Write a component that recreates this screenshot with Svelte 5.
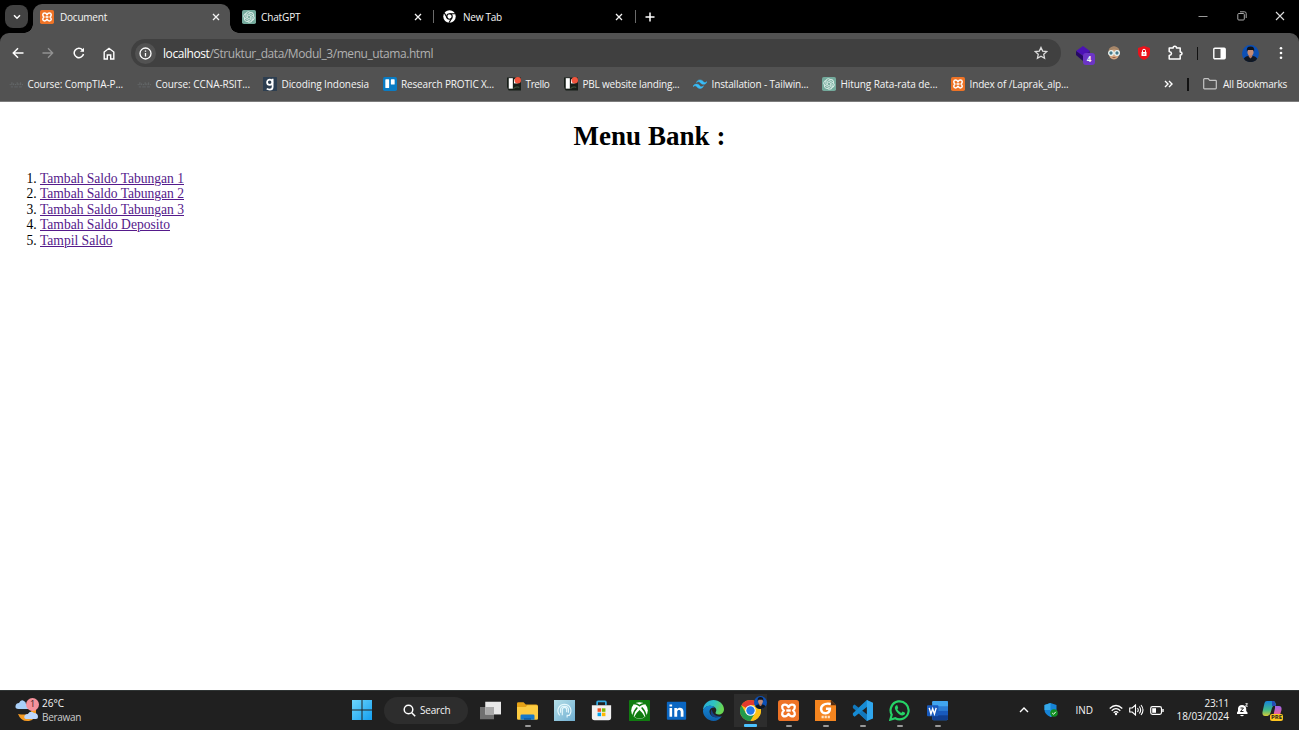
<script>
  const bookmarks = [
    { icon: 'cisco', label: 'Course: CompTIA-P...', w: 95.5, cell: 128 },
    { icon: 'cisco', label: 'Course: CCNA-RSIT...', w: 94.5, cell: 126 },
    { icon: 'dicoding', label: 'Dicoding Indonesia', w: 87.5, cell: 119.5 },
    { icon: 'trello', label: 'Research PROTIC X...', w: 93, cell: 124.5 },
    { icon: 'board', label: 'Trello', w: 24, cell: 57 },
    { icon: 'board', label: 'PBL website landing...', w: 97, cell: 129 },
    { icon: 'tailwind', label: 'Installation - Tailwin...', w: 97, cell: 129 },
    { icon: 'gpt', label: 'Hitung Rata-rata de...', w: 97, cell: 129 },
    { icon: 'xampp', label: 'Index of /Laprak_alp...', w: 99, cell: 130 }
  ];
  const links = [
    { label: 'Tambah Saldo Tabungan 1', w: 144 },
    { label: 'Tambah Saldo Tabungan 2', w: 144 },
    { label: 'Tambah Saldo Tabungan 3', w: 144 },
    { label: 'Tambah Saldo Deposito', w: 130 },
    { label: 'Tampil Saldo', w: 72.5 }
  ];
  const apps = [
    { icon: 'taskview' },
    { icon: 'explorer', run: true },
    { icon: 'finger' },
    { icon: 'store' },
    { icon: 'xbox' },
    { icon: 'linkedin' },
    { icon: 'edge' },
    { icon: 'chrome', active: true },
    { icon: 'xampp', run: true },
    { icon: 'foxit', run: true },
    { icon: 'vscode', run: true },
    { icon: 'whatsapp', run: true },
    { icon: 'word', run: true }
  ];

  // Tracks the text so that the label fills the given width.
  function fit(node, width) {
    node.style.letterSpacing = '0px';
    const natural = node.getBoundingClientRect().width;
    node.style.letterSpacing = (width - natural) / node.textContent.length + 'px';
  }
</script>

{#snippet icon(name, size)}
  <svg width={size} height={size} viewBox="0 0 24 24" fill="none">
    {#if name === 'xampp'}
      <rect width="24" height="24" rx="3" fill="#ee7326" />
      <path d="M12 8.200Q10.500 5.300 8 5.300C4 5.300 3.800 9.500 6.800 12 3.800 14.500 4 18.700 8 18.700q2.500 0 4-2.900 1.500 2.900 4 2.900c4 0 4.200-4.200 1.200-6.700 3-2.500 2.800-6.700-1.200-6.700q-2.500 0-4 2.900Z" stroke="#fff" stroke-width="2.600" stroke-linejoin="round" />
      <path d="M9.500 12h5" stroke="#fff" stroke-width="2.800" />
    {:else if name === 'gpt'}
      <rect width="24" height="24" rx="3" fill="#74aa9c" />
      <path transform="translate(2.400 2.400) scale(.8)" stroke="#e9f5f1" stroke-width=".3" fill="#e9f5f1" d="M22.2819 9.8211a5.9847 5.9847 0 0 0-.5157-4.9108 6.0462 6.0462 0 0 0-6.5098-2.9A6.0651 6.0651 0 0 0 4.9807 4.1818a5.9847 5.9847 0 0 0-3.9977 2.9 6.0462 6.0462 0 0 0 .7427 7.0966 5.98 5.98 0 0 0 .511 4.9107 6.051 6.051 0 0 0 6.5146 2.9001A5.9847 5.9847 0 0 0 13.2599 24a6.0557 6.0557 0 0 0 5.7718-4.2058 5.9894 5.9894 0 0 0 3.9977-2.9001 6.0557 6.0557 0 0 0-.7475-7.0729zm-9.022 12.6081a4.4755 4.4755 0 0 1-2.8764-1.0408l.1419-.0804 4.7783-2.7582a.7948.7948 0 0 0 .3927-.6813v-6.7369l2.02 1.1686a.071.071 0 0 1 .038.052v5.5826a4.504 4.504 0 0 1-4.4945 4.4944zm-9.6607-4.1254a4.4708 4.4708 0 0 1-.5346-3.0137l.142.0852 4.783 2.7582a.7712.7712 0 0 0 .7806 0l5.8428-3.3685v2.3324a.0804.0804 0 0 1-.0332.0615L9.74 19.9502a4.4992 4.4992 0 0 1-6.1408-1.6464zM2.3408 7.8956a4.485 4.485 0 0 1 2.3655-1.9728V11.6a.7664.7664 0 0 0 .3879.6765l5.8144 3.3543-2.0201 1.1685a.0757.0757 0 0 1-.071 0l-4.8303-2.7865A4.504 4.504 0 0 1 2.3408 7.872zm16.5963 3.8558L13.1038 8.364 15.1192 7.2a.0757.0757 0 0 1 .071 0l4.8303 2.7913a4.4944 4.4944 0 0 1-.6765 8.1042v-5.6772a.79.79 0 0 0-.407-.667zm2.0107-3.0231l-.142-.0852-4.7735-2.7818a.7759.7759 0 0 0-.7854 0L9.409 9.2297V6.8974a.0662.0662 0 0 1 .0284-.0615l4.8303-2.7866a4.4992 4.4992 0 0 1 6.6802 4.66zM8.3065 12.863l-2.02-1.1638a.0804.0804 0 0 1-.038-.0567V6.0742a4.4992 4.4992 0 0 1 7.3757-3.4537l-.142.0805L8.704 5.459a.7948.7948 0 0 0-.3927.6813zm1.0976-2.3654l2.602-1.4998 2.6069 1.4998v2.9994l-2.5974 1.4997-2.6067-1.4997Z" />
    {:else if name === 'cisco'}
      <path d="M2 12v2M5 9v5M8 11v3M11 12v2M14 9v5M17 11v3M20 9v5M23 12v2" stroke="#6b7072" stroke-width="1.300" />
      <path d="M3 17h4M9 17h6M17 17h5" stroke="#62676a" stroke-width="1.500" />
    {:else if name === 'dicoding'}
      <rect width="24" height="24" rx="1" fill="#2d3e50" />
      <circle cx="11.500" cy="9" r="4.500" stroke="#fff" stroke-width="3" />
      <path d="M16.500 3v14c0 3-2 4.500-5 4.500-2 0-4-.5-5-1.500" stroke="#fff" stroke-width="3" />
    {:else if name === 'trello'}
      <rect width="24" height="24" rx="3" fill="#0a7cc4" />
      <rect x="4" y="4" width="6.500" height="15" rx="1" fill="#fff" />
      <rect x="13.500" y="4" width="6.500" height="9" rx="1" fill="#fff" />
    {:else if name === 'board'}
      <path d="M0 1h24v22H3Q0 20 0 16Z" fill="#171e18" />
      <path d="M3 2h7v18H3Z" fill="#fff" />
      <path d="M12 4h6v7h-6Z" fill="#fff" />
      <path d="M11 20q5-5 10-2" stroke="#3d4c3a" stroke-width="2" />
      <circle cx="18.500" cy="5.500" r="5.500" fill="#f1553d" />
    {:else if name === 'tailwind'}
      <path d="M12 5c-3.200 0-5.200 1.600-6 4.800 1.200-1.600 2.600-2.200 4.200-1.800.9.200 1.600.9 2.300 1.700C13.700 10.900 15.100 12.400 18 12.400c3.200 0 5.200-1.600 6-4.800-1.200 1.600-2.600 2.200-4.200 1.800-.9-.2-1.600-.9-2.300-1.700C16.300 6.500 14.900 5 12 5ZM6 12.200c-3.200 0-5.200 1.600-6 4.800 1.200-1.600 2.600-2.200 4.200-1.800.9.200 1.600.9 2.300 1.700 1.200 1.200 2.600 2.700 5.500 2.700 3.200 0 5.200-1.600 6-4.800-1.200 1.600-2.600 2.200-4.200 1.800-.9-.2-1.600-.9-2.300-1.700-1.200-1.200-2.600-2.700-5.500-2.700Z" fill="#38bdf8" stroke="#38bdf8" stroke-width=".8" />
    {:else if name === 'chromemono'}
      <circle cx="12" cy="12" r="11.500" fill="#fff" />
      <circle cx="12" cy="12" r="5" stroke="#000" stroke-width="2" />
      <path d="M12 7h11M7.700 14.500 2.300 5.200M16.300 14.500 11 23.500" stroke="#000" stroke-width="2" />
    {:else if name === 'taskview'}
      <rect x="0" y="8" width="16" height="14" fill="#707070" />
      <rect x="6" y="2" width="18" height="14.500" fill="#e8e8e8" />
      <rect x="6" y="8" width="10" height="8.500" fill="#a9a9a9" />
    {:else if name === 'explorer'}
      <path d="M0 4q0-1.500 1.500-1.500h6L10 5H22q2 0 2 2v4H0Z" fill="#e7a316" />
      <path d="M0 8h10l2-2h10q2 0 2 2v13q0 1.500-1.500 1.500h-21Q0 22.500 0 21Z" fill="#fdcc42" />
      <path d="M4 22.500V18q0-1.500 1.500-1.500h13Q20 16.500 20 18v4.500Z" fill="#1679cb" />
      <path d="M8 22.500V21h8v1.500Z" fill="#0a559c" />
    {:else if name === 'finger'}
      <defs><linearGradient id="fg" x1="0" y1="0" x2="1" y2="1"><stop stop-color="#b5dfe8" /><stop offset="1" stop-color="#70afd2" /></linearGradient></defs>
      <rect width="24" height="24" fill="url(#fg)" />
      <path d="M6.500 17.500C2 12 5.500 5 12 5s9.500 7 5.500 12.500H15V20M9.500 17.500V11c0-3.500 5-3.500 5 0v3M7.500 14.500v-4c.5-4.500 8.500-4.500 9 0v4" stroke="#e4f7fc" stroke-width="1.300" />
    {:else if name === 'store'}
      <path d="M7 6V2.500q0-1 1-1h8q1 0 1 1V6" stroke="#31a8e0" stroke-width="2" />
      <path d="M1 6h22v14q0 3-3 3H4q-3 0-3-3Z" fill="#f1f1f1" />
      <path d="M7.500 9.500h4v4h-4Z" fill="#f25022" /><path d="M12.500 9.500h4v4h-4Z" fill="#7fba00" />
      <path d="M7.500 14.500h4v4h-4Z" fill="#00a4ef" /><path d="M12.500 14.500h4v4h-4Z" fill="#ffb900" />
    {:else if name === 'xbox'}
      <rect width="24" height="24" rx="1" fill="#107c10" />
      <circle cx="12" cy="12" r="9.500" fill="#fff" />
      <path d="M6 4.500C8 3.800 10 5 12 6.500 14 5 16 3.800 18 4.500M9.500 8.500C6.500 11.500 5 15 4.300 19M14.500 8.500c3 3 4.500 6.500 5.200 10.500" stroke="#107c10" stroke-width="1.800" />
      <path d="M12 11.500q-4 3.500-6 7.500 6 4.500 12 0-2-4-6-7.500Z" fill="#107c10" />
    {:else if name === 'linkedin'}
      <rect x="1" y="2" width="22" height="20.500" rx="1" fill="#0a66c2" />
      <path d="M4 9h3v10H4ZM4 5h3v2.500H4ZM9.500 9h3v1.500C14 8 20 8 20 13v6h-3.200v-5.500c0-3-4-2.800-4 0V19H9.500Z" fill="#fff" />
    {:else if name === 'edge'}
      <defs>
        <linearGradient id="ed" x1="0" y1="0" x2="1" y2=".3"><stop stop-color="#26a9df" /><stop offset=".55" stop-color="#2fc3c0" /><stop offset="1" stop-color="#69d652" /></linearGradient>
        <linearGradient id="ee" x1="0" y1="0" x2="0" y2="1"><stop stop-color="#1485d2" /><stop offset="1" stop-color="#0e61ad" /></linearGradient>
      </defs>
      <path d="M0 12C0 5 5.500 0 12 0s12 5 12 10.500c0 4-3 6-6 6-2.500 0-4.500-1-3.500-2.500C17 10 13 6.500 8.500 6.500 4 6.500 1 9 0 12Z" fill="url(#ed)" />
      <path d="M0 12c1-3.500 4-5.500 8.500-5.500 2.500 0 4 1 5 2C9 8 7 11 7.500 14c.7 4.500 6 7.500 14 4.500C19 22 16 24 12 24 5 24-.4 18 0 12Z" fill="url(#ee)" />
      <path d="M10 10.500c-4 6 2 12 11.500 8-5 1-10.500-1-11.500-8Z" fill="#173f80" />
    {:else if name === 'chrome'}
      <circle cx="12" cy="12" r="12" fill="#fbc116" />
      <path d="M12 12 1.600 6A12 12 0 0 1 22.400 6H12Z" fill="#e33b2e" />
      <path d="M1.600 6A12 12 0 0 0 12 24l5.200-9H6.800Z" fill="#229a4c" />
      <path d="M12 6h10.400A12 12 0 0 1 12 24l5.200-9Z" fill="#fbc116" />
      <circle cx="12" cy="12" r="6" fill="#fff" /><circle cx="12" cy="12" r="4.800" fill="#2479e8" />
    {:else if name === 'foxit'}
      <path d="M0 0h18l6 6v18H0Z" fill="#f5851f" /><path d="M18 0v6h6Z" fill="#542c10" />
      <path d="M18 4.500C10 3 6.500 7 7 11c.7 6 10 5.500 10-1h-4.500" stroke="#fff" stroke-width="2.800" />
      <path d="M7.500 19.500h9.500" stroke="#ffe0bd" stroke-width="2.800" stroke-dasharray="2.500 1" />
    {:else if name === 'vscode'}
      <path d="M17 0 4 12l13 12 1-5-8-7 8-7Z" fill="#1687cf" />
      <path d="M1 6.500 3 5l15 12v7L1 9Z" fill="#1279bd" /><path d="M1 17.500 3 19 18 7V0L1 15Z" fill="#168bd4" />
      <path d="m17 0 7 3v18l-7 3Z" fill="#2fa6ed" />
    {:else if name === 'whatsapp'}
      <path d="m1.500 22.500 1.600-5.700a10.300 10.300 0 1 1 4 4Z" stroke="#25d366" stroke-width="2.500" />
      <path d="M8.500 6C6 7.500 6.500 10 8 12.500c2.500 4 6.500 6 9 4.700 1.500-.8 1.500-1.800 1.300-2.500L15.500 13l-1.500 1.800q-3-1.200-4.500-4.200l1-1.600L9.500 6Z" fill="#25d366" />
    {:else if name === 'word'}
      <rect x="6" y="1" width="18" height="22" rx="1.500" fill="#2b7cd3" />
      <path d="M6 2.500Q6 1 7.500 1h15Q24 1 24 2.500V7H6Z" fill="#41a5ee" />
      <path d="M6 12.500h18V18H6Z" fill="#185abd" /><path d="M6 17.500h18v4q0 1.500-1.500 1.500h-15Q6 23 6 21.500Z" fill="#103f91" />
      <rect x="0" y="6" width="13" height="12.500" rx="1" fill="#185abd" />
      <path d="m2.500 9 2 7 2-6 2 6 2-7" stroke="#fff" stroke-width="1.600" />
    {:else if name === 'avatar'}
      <circle cx="12" cy="12" r="12" fill="#0d50b5" />
      <path d="M2.500 19.500q2-4.500 9.500-4.500t9.500 4.500a12 12 0 0 1-19 0Z" fill="#101722" />
      <path d="M9.500 12h5v4.500L12 19l-2.500-2.500Z" fill="#b27661" />
      <ellipse cx="12" cy="9.800" rx="4.300" ry="5.300" fill="#c58b73" />
      <path d="M7 9.500Q5.500 2 12 2t5 7.500L15.800 7H8.200Z" fill="#11131a" />
    {/if}
  </svg>
{/snippet}

{#snippet cross()}
  <svg width="8" height="8" viewBox="0 0 8 8"><path d="m1 1 6 6M7 1 1 7" stroke="#f2f2f2" stroke-width="1.300" /></svg>
{/snippet}

<div class="screen">
  <header class="tabs">
    <button class="drop" aria-label="Search tabs"><svg width="8" height="6" viewBox="0 0 8 6"><path d="m1 1.200 3 3 3-3" fill="none" stroke="#fff" stroke-width="1.500" /></svg></button>
    <div class="tab active">{@render icon('xampp', 14)}<span class="title"><span use:fit={47}>Document</span></span>{@render cross()}</div>
    <div class="tab second">{@render icon('gpt', 14)}<span class="title"><span use:fit={39.5}>ChatGPT</span></span>{@render cross()}</div>
    <i class="bar"></i>
    <div class="tab third">{@render icon('chromemono', 13)}<span class="title"><span use:fit={39}>New Tab</span></span>{@render cross()}</div>
    <i class="bar"></i>
    <svg class="plus" width="10" height="10" viewBox="0 0 10 10"><path d="M5 .5v9M.5 5h9" stroke="#fff" stroke-width="1.500" /></svg>
    <div class="win">
      <svg width="10" height="10" viewBox="0 0 10 10"><path d="M.5 5.500h9" stroke="#999" /></svg>
      <svg width="10" height="10" viewBox="0 0 10 10" fill="none" stroke="#aaa"><rect x=".8" y="2.500" width="6.500" height="6.500" rx="1" /><path d="M3 .8h4.500q1.700 0 1.700 1.700V7" /></svg>
      <svg width="10" height="10" viewBox="0 0 10 10"><path d="m1 1 8 8M9 1 1 9" stroke="#ddd" stroke-width="1.100" /></svg>
    </div>
  </header>

  <div class="toolbar">
    <nav class="nav">
      <svg width="12" height="12" viewBox="0 0 12 12" fill="none" stroke="#fff" stroke-width="1.500"><path d="M11.500 6H1.500M6 1.300 1.300 6 6 10.700" /></svg>
      <svg width="12" height="12" viewBox="0 0 12 12" fill="none" stroke="#929292" stroke-width="1.300"><path d="M.5 6h10M6 1.300 10.700 6 6 10.700" /></svg>
      <svg width="12" height="12" viewBox="0 0 12 12" fill="none" stroke="#fff" stroke-width="1.500"><path d="M10.500 7A4.700 4.700 0 1 1 9.400 2.800L10.500 4" /><path d="M11 .7v4H7Z" fill="#fff" stroke="none" /></svg>
      <svg width="12" height="13" viewBox="0 0 12 13" fill="none" stroke="#fff" stroke-width="1.400"><path d="M1.200 5 6 1.300 10.800 5v7H7.700V8H4.300v4H1.200Z" /></svg>
    </nav>
    <div class="omni">
      <span class="info"><svg width="13" height="13" viewBox="0 0 13 13" fill="none" stroke="#fff" stroke-width="1.300"><circle cx="6.500" cy="6.500" r="5.500" /><path d="M6.500 6v3.500M6.500 3.400v1.300" /></svg></span>
      <span class="url"><span use:fit={270}><b>localhost</b>/Struktur_data/Modul_3/menu_utama.html</span></span>
      <svg width="14" height="14" viewBox="0 0 24 24" fill="none" stroke="#ddd" stroke-width="2.200"><path d="m12 2.500 2.900 6.300 6.900.8-5.100 4.700 1.400 6.800-6.100-3.500-6.100 3.500 1.400-6.800-5.100-4.700 6.900-.8Z" /></svg>
    </div>
    <div class="ext">
      <span class="e1"><svg width="21" height="20" viewBox="0 0 21 20"><path d="m8 1 7 5-7 5-7-5Z" fill="#4b11b5" /><path d="m1 6 7 5v5L1 10Z" fill="#260865" /><path d="m8 11 7-5v5l-7 5Z" fill="#3b0e91" /><rect x="8" y="8" width="12" height="12" rx="3" fill="#6c35c5" /></svg><em>4</em></span>
      <svg class="e2" width="14" height="14" viewBox="0 0 14 14"><ellipse cx="7" cy="7" rx="5.500" ry="6.500" fill="#d3a580" /><path d="M1.500 5Q2 .5 7 .5T12.500 5Q7 2 1.500 5Z" fill="#a78769" /><circle cx="4" cy="7" r="2.300" fill="#477989" stroke="#e8f5f5" stroke-width="1.300" /><circle cx="10" cy="7" r="2.300" fill="#477989" stroke="#e8f5f5" stroke-width="1.300" /><path d="M5.500 11.500h3" stroke="#966049" /></svg>
      <svg class="e3" width="12" height="14" viewBox="0 0 12 14"><path d="M6 0 12 2v5q0 4.500-6 7-6-2.500-6-7V2Z" fill="#e9121b" /><rect x="3.500" y="6" width="5" height="4" fill="#fff" /><path d="M4.500 6V4.500q0-1.200 1.500-1.200t1.500 1.200V6" fill="none" stroke="#fff" /><circle cx="6" cy="8" r=".7" fill="#e9121b" /></svg>
      <svg class="e4" width="15" height="15" viewBox="0 0 15 15" fill="none" stroke="#fff" stroke-width="1.500" stroke-linejoin="round"><path d="M1.200 3h4Q5 1.200 6.800 1.200T8.500 3h3.700v4q1.800 0 1.800 1.500T12.200 10v4h-11v-3.600Q3.500 10 3.500 8.500T1.200 6.500Z" /></svg>
      <i class="div thin"></i>
      <svg class="e5" width="13" height="13" viewBox="0 0 13 13"><rect x=".8" y="1.200" width="11.400" height="10.600" rx="1" fill="none" stroke="#fff" stroke-width="1.400" /><path d="M7.500 1H12v11H7.500Z" fill="#fff" /></svg>
      <span class="e6">{@render icon('avatar', 17)}</span>
      <svg class="e7" width="4" height="14" viewBox="0 0 4 14" fill="#fff"><circle cx="2" cy="2.200" r="1.300" /><circle cx="2" cy="7" r="1.300" /><circle cx="2" cy="11.800" r="1.300" /></svg>
    </div>
  </div>

  <div class="marks">
    {#each bookmarks as b}
      <span class="mark" style:width="{b.cell}px">{@render icon(b.icon, 14)}<span use:fit={b.w}>{b.label}</span></span>
    {/each}
    <svg class="more" width="9" height="8" viewBox="0 0 9 8" fill="none" stroke="#fff" stroke-width="1.400"><path d="m1 1 3 3-3 3M5 1l3 3-3 3" /></svg>
    <i class="div"></i>
    <svg class="folder" width="14" height="12" viewBox="0 0 14 12" fill="none" stroke="#c4c4c4" stroke-width="1.200"><path d="M.7 1.500q0-.8.8-.8h3.700L6.700 2.300h5.800q.8 0 .8.8v7q0 .8-.8.8h-11q-.8 0-.8-.8Z" /></svg>
    <span class="all"><span use:fit={64}>All Bookmarks</span></span>
  </div>

  <main>
    <h1><span use:fit={152}>Menu Bank :</span></h1>
    <ol>
      {#each links as l}
        <li><a href="#top" use:fit={l.w}>{l.label}</a></li>
      {/each}
    </ol>
  </main>

  <footer>
    <div class="weather">
      <svg width="25" height="25" viewBox="0 0 25 25"><path d="M17 7q2 12-14 9 3 8 11 7 8-2 7-11-1-4-4-5Z" fill="#f59b23" /><path d="M3.500 11Q0 11 .5 8t3.500-3Q6 1 9 3q2 1 2 3 3 1 2 5Z" fill="#a9cff8" /><path d="M11 21q-3-1-1-4 1-1 3-1 2-4 6-1 4 0 4 4 0 2-2 2Z" fill="#bcd6fb" /><circle cx="17.500" cy="6.500" r="6.500" fill="#f5929c" /></svg>
      <em>1</em>
      <div class="wtext"><span><span use:fit={22}>26°C</span></span><span class="dim"><span use:fit={39}>Berawan</span></span></div>
    </div>
    <svg class="start" width="20" height="20" viewBox="0 0 20 20"><defs><linearGradient id="wn" x1="0" y1="0" x2="1" y2="1"><stop stop-color="#6ed5fb" /><stop offset="1" stop-color="#139ff1" /></linearGradient></defs><path d="M0 0h9.500v9.500H0ZM10.500 0H20v9.500h-9.500ZM0 10.500h9.500V20H0ZM10.500 10.500H20V20h-9.500Z" fill="url(#wn)" /></svg>
    <div class="search"><svg width="13" height="13" viewBox="0 0 13 13" fill="none" stroke="#fff" stroke-width="1.500"><circle cx="5.500" cy="5.500" r="4.300" /><path d="m8.700 8.700 3.500 3.500" /></svg><span use:fit={30.5}>Search</span></div>
    <div class="apps">
      {#each apps as a}
        <div class="app" class:on={a.active} class:run={a.run}>
          {@render icon(a.icon, 21)}
          {#if a.active}<span class="face">{@render icon('avatar', 13)}</span>{/if}
        </div>
      {/each}
    </div>
    <div class="tray">
      <svg class="t1" width="10" height="6" viewBox="0 0 10 6"><path d="m1 5 4-4 4 4" fill="none" stroke="#fff" stroke-width="1.400" /></svg>
      <svg class="t2" width="14" height="15" viewBox="0 0 14 15"><path d="M6.500 0 12.500 2v5q0 4-6 7-6-3-6-7V2Z" fill="#1683d6" /><path d="M6.500 0v7h-6V2ZM6.500 7h6q0 4-6 7Z" fill="#35a8e8" /><circle cx="10" cy="10" r="3.800" fill="#118f21" /><path d="m8.200 10 1.300 1.300 2.300-2.500" fill="none" stroke="#fff" /></svg>
      <span class="t3"><span use:fit={17.5}>IND</span></span>
      <svg class="t4" width="14" height="12" viewBox="0 0 14 12" fill="none" stroke="#fff" stroke-width="1.200"><path d="M.7 4.500Q7-1.500 13.300 4.500M2.700 6.700q4.300-4 8.600 0M4.700 8.700q2.300-2 4.600 0" /><circle cx="7" cy="10" r="1.200" fill="#fff" stroke="none" /></svg>
      <svg class="t5" width="15" height="12" viewBox="0 0 15 12" fill="none" stroke="#fff" stroke-width="1.100"><path d="M.7 4h2.500L6.500 1v10L3.200 8H.7ZM8.500 4q1.500 2 0 4M10.300 2.500q2.700 3.500 0 7M12 1q4 5 0 10" /></svg>
      <svg class="t6" width="14" height="9" viewBox="0 0 14 9"><rect x=".7" y=".7" width="10.800" height="7.600" rx="1.800" fill="none" stroke="#fff" stroke-width="1.200" /><path d="M2.200 2.200H6v4.600H2.200Z" fill="#fff" /><path d="M13 3v3" stroke="#fff" stroke-width="1.400" /></svg>
      <div class="clock"><span><span use:fit={24.5}>23:11</span></span><span><span use:fit={52.5}>18/03/2024</span></span></div>
      <svg class="t7" width="13" height="14" viewBox="0 0 13 14"><path d="M1 11V9.500L2 8V5.500Q2.300 2 6 2t4.200 3.500V8l1.300 1.500V11Z" fill="#fff" /><path d="M4 12h4q-2 2.500-4 0" fill="#fff" /><path d="M4.500 5h3l-3 3.500h3" fill="none" stroke="#202020" /><path d="M9.500.7h2L9.500 3.200h2.300" fill="none" stroke="#fff" stroke-width=".9" /></svg>
      <span class="t8"><svg width="21" height="20" viewBox="0 0 21 20"><defs><linearGradient id="ca" x1="0" y1="0" x2="0" y2="1"><stop stop-color="#1683dc" /><stop offset=".6" stop-color="#42bc88" /><stop offset="1" stop-color="#d6cc35" /></linearGradient><linearGradient id="cb" x1="0" y1="0" x2="0" y2="1"><stop stop-color="#9a65e8" /><stop offset=".6" stop-color="#e562a5" /><stop offset="1" stop-color="#f99352" /></linearGradient></defs><path d="M5 1h6q2 0 2.500 2l.5 2q-3 0-4 3l-1.500 5q-1 3-3 3H3q-3 0-2.500-4L2.500 3q.5-2 2.500-2Z" fill="url(#ca)" /><path d="M10 1h1q2 0 3 5h-4Z" fill="#254cb4" /><path d="M13 6h4q3 0 2.500 4L18 15q-1 3-3 3H9q2 0 2.500-3L13 8Z" fill="url(#cb)" /></svg><em>PRE</em></span>
    </div>
  </footer>
</div>

<style>
  :global(body) { margin: 0; overflow: hidden; background: #000; }
  .screen { width: 1299px; height: 730px; display: flex; flex-direction: column; background: #000; color: #f5f5f5; font: 10px/14px "Open Sans", "Noto Sans", sans-serif; }
  .screen * { box-sizing: border-box; }
  svg { display: block; flex: none; }
  span { white-space: nowrap; }
  em { font-style: normal; }
  .tabs { height: 33px; flex: none; display: flex; align-items: center; }
  .drop { width: 23px; height: 23px; margin: 0 5px; padding: 0; border: 0; border-radius: 8px; background: #424242; display: flex; align-items: center; justify-content: center; }
  .tab { height: 29px; display: flex; align-items: center; }
  .title { flex: 1; padding-left: 6px; }
  .active { position: relative; align-self: flex-end; width: 197px; padding: 0 10px 4px 7px; border-radius: 9px 9px 0 0; background: #525252; }
  .active::before, .active::after { content: ""; position: absolute; bottom: 0; width: 9px; height: 9px; }
  .active::before { left: -9px; background: radial-gradient(circle at 0 0, transparent 8.500px, #525252 9px); }
  .active::after { right: -9px; background: radial-gradient(circle at 100% 0, transparent 8.500px, #525252 9px); }
  .second { width: 203px; padding: 0 11px 0 12px; }
  .second .title { padding-left: 5px; }
  .bar { width: 1px; height: 13px; background: #6a6a6a; }
  .third { width: 201px; padding: 0 12px 0 9px; }
  .third .title { padding-left: 7px; }
  .plus { margin-left: 9px; }
  .win { margin-left: auto; display: flex; gap: 28.500px; padding-right: 14px; padding-bottom: 2px; }
  .toolbar { height: 40px; flex: none; display: flex; align-items: center; background: #525252; border-radius: 9px 9px 0 0; }
  .nav { display: flex; align-items: center; width: 131px; padding-left: 12px; gap: 18.300px; }
  .omni { width: 930px; height: 28px; border-radius: 14px; background: #404040; display: flex; align-items: center; padding: 0 13px 0 4px; }
  .info { width: 21px; height: 21px; border-radius: 50%; background: #525252; display: grid; place-items: center; }
  .url { flex: 1; padding-left: 7px; font-size: 12px; color: #b1b1b1; position: relative; top: .5px; }
  .url b { color: #fff; font-weight: 400; }
  .ext { flex: 1; display: flex; align-items: center; padding-left: 14px; }
  .e1 { position: relative; margin-top: 3px; }
  .e1 em { position: absolute; right: 1px; bottom: -1px; width: 12px; text-align: center; font-size: 8px; font-weight: 700; line-height: 14px; }
  .e2 { margin-left: 11px; }
  .e3 { margin-left: 17px; }
  .e4 { margin: 0 0 2px 17.500px; }
  .ext .div { margin-left: 14px; }
  .div { width: 2px; height: 13px; background: #111; }
  .ext .thin { width: 1px; }
  .e5 { margin-left: 15px; }
  .e6 { margin-left: 16px; }
  .e7 { margin-left: 20px; }
  .marks { height: 29px; flex: none; display: flex; align-items: center; padding: 0 0 6px 9px; background: #525252; border-bottom: 1px solid #7c7c7c; }
  .mark { display: flex; align-items: center; gap: 4.500px; flex: none; }
  .more { margin-left: 83px; }
  .marks .div { margin-left: 14px; }
  .folder { margin: 0 6px 0 14px; }
  main { flex: 1; background: #fff; color: #000; font: 13.600px/15.600px "Liberation Serif", "Times New Roman", serif; }
  h1 { margin: 18px 0 0; text-align: center; font-size: 27px; line-height: 32px; }
  ol { margin: 18.500px 0 0; padding-left: 40px; }
  a { color: #551a8b; text-decoration: underline; white-space: nowrap; }
  footer { height: 40px; flex: none; display: flex; align-items: center; background: #202020; border-top: 1px solid #303535; padding-bottom: 1px; }
  .weather { width: 352px; display: flex; align-items: center; padding-left: 15px; position: relative; gap: 2px; }
  .weather em { position: absolute; left: 26px; top: 0; width: 13px; text-align: center; font-size: 9px; line-height: 15px; color: #332426; }
  .wtext span { display: block; width: max-content; }
  .dim { color: #ccc; }
  .search { width: 84px; height: 27px; margin-left: 12px; border-radius: 14px; background: #2d2d2d; display: flex; align-items: center; gap: 4px; padding-left: 19px; }
  .apps { display: flex; margin-left: 3.500px; }
  .app { width: 37.250px; height: 33px; display: grid; place-items: center; position: relative; }
  .app.on { background: linear-gradient(#2d2d2d, #2d2d2d) center / 33px 33px no-repeat; }
  .run::after, .on::after { content: ""; position: absolute; bottom: 0; left: 16px; width: 6px; height: 2px; border-radius: 1px; background: #999; }
  .on::after { left: 12px; width: 13px; height: 3px; background: #4cc2ff; }
  .face { position: absolute; right: 3px; top: 2px; }
  .tray { display: flex; align-items: center; margin-left: auto; }
  .t2 { margin-left: 15px; }
  .t3 { margin-left: 17px; }
  .t4 { margin-left: 16px; }
  .t5 { margin-left: 6px; }
  .t6 { margin-left: 6px; }
  .clock { width: 65px; display: flex; flex-direction: column; align-items: flex-end; }
  .clock > span { display: block; line-height: 13.500px; }
  .t7 { margin: 0 13px 0 7px; }
  .t8 { position: relative; margin-right: 16px; }
  .t8 em { position: absolute; right: 0; bottom: -1px; padding: 0 1px; border-radius: 2px; background: #ffc51f; color: #222; font-size: 6px; font-weight: 700; line-height: 7px; }
</style>
